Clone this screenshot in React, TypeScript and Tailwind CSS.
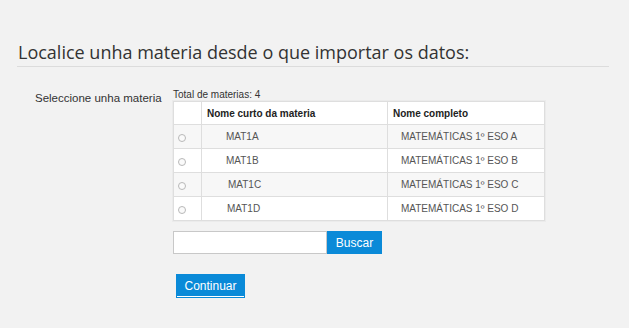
const materias = [
  { id: "a", curto: "MAT1A", completo: "MATEMÁTICAS 1º ESO A", pad: "pl-[24px]" },
  { id: "b", curto: "MAT1B", completo: "MATEMÁTICAS 1º ESO B", pad: "pl-[24px]" },
  { id: "c", curto: "MAT1C", completo: "MATEMÁTICAS 1º ESO C", pad: "pl-[26px]" },
  { id: "d", curto: "MAT1D", completo: "MATEMÁTICAS 1º ESO D", pad: "pl-[25px]" },
];

export default function App() {
  return (
    <div className="h-[328px] w-full bg-[#f2f2f2] pt-[40px] font-['Liberation_Sans',Arial,sans-serif] text-[#333]">
      <h2 className="mx-[17px] mr-[20px] border-b border-[#dcdcdc] pb-[2px] pl-[1px] font-['Open_Sans',sans-serif] text-[18px] leading-[24px] text-[#333]">
        Localice unha materia desde o que importar os datos:
      </h2>

      <div className="mt-[22px] flex">
        <label className="w-[173px] shrink-0 pl-[35px] pt-[2px] text-[11.5px] leading-[14px] text-[#333]">
          Seleccione unha materia
        </label>

        <div className="flex flex-col">
          <p className="text-[10px] leading-[12px] text-[#333]">Total de materias: 4</p>

          <table className="w-[372px] border-collapse border border-[#dedede] bg-white text-[10px] shadow-[0_0_0_1px_#ebebeb]">
            <thead>
              <tr className="h-[23px]">
                <th className="w-[28px] border border-[#dedede]"></th>
                <th className="w-[186px] border border-[#dedede] pl-[5px] text-left font-bold text-[#222]">
                  Nome curto da materia
                </th>
                <th className="border border-[#dedede] pl-[5px] text-left font-bold text-[#222]">Nome completo</th>
              </tr>
            </thead>
            <tbody>
              {materias.map((m, i) => (
                <tr key={m.id} className={`h-[24px] ${i % 2 === 0 ? "bg-[#f7f7f7]" : "bg-white"}`}>
                  <td className="border border-[#dedede] pl-[4px] pt-[2px]">
                    <span className="block h-[8px] w-[8px] rounded-full border border-[#b8b8b8] bg-[#fafafa]" />
                  </td>
                  <td className={`border border-[#dedede] text-[#555] ${m.pad}`}>{m.curto}</td>
                  <td className="border border-[#dedede] pl-[13px] text-[#555]">{m.completo}</td>
                </tr>
              ))}
            </tbody>
          </table>

          <div className="mt-[10px] flex">
            <input
              type="text"
              className="h-[23px] w-[154px] border border-[#c8c8c8] bg-white px-1 text-[12px] outline-none"
            />
            <button className="h-[23px] w-[55px] bg-[#0a8ad8] text-[12px] text-white">Buscar</button>
          </div>

          <div className="mt-[19px] pl-[3px]">
            <button className="h-[24px] w-[69px] border border-[#0a8ad8] bg-[#0a8ad8] text-[12px] text-white shadow-[inset_0_-1px_0_#ffffff]">
              Continuar
            </button>
          </div>
        </div>
      </div>
    </div>
  );
}
